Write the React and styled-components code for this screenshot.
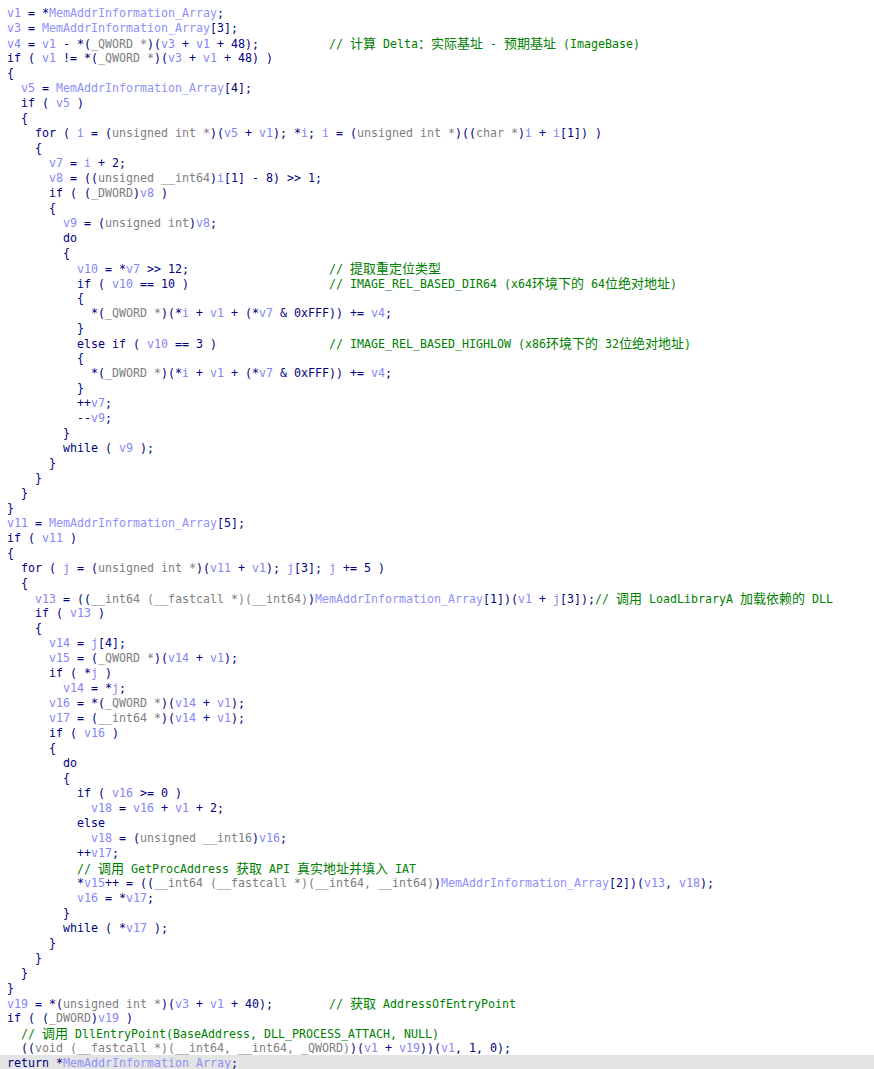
import React from "react";
import styled, { createGlobalStyle } from "styled-components";

const Global = createGlobalStyle`
  html, body { margin: 0; padding: 0; background: #ffffff; }
  #root { min-height: 1069px; background: #ffffff; }
`;

const COLORS = {
  punct: "#000080",
  kw: "#000080",
  num: "#000080",
  var: "#8585f5",
  glob: "#9090fa",
  type: "#808080",
  comment: "#008000",
};

const Editor = styled.div`
  padding-top: 5px;
  font-family: "DejaVu Sans Mono", "Liberation Mono", monospace;
  font-size: 11.63px;
  color: #000080;
  width: 874px;
  height: 1069px;
  overflow: hidden;
  box-sizing: border-box;
`;

const Line = styled.div`
  box-sizing: border-box;
  height: 15px;
  padding-top: 1px;
  line-height: 14px;
  white-space: pre;
  padding-left: 7px;
  background: ${(p) => (p.$active ? "#e4e4e4" : "transparent")};
`;

const Tok = styled.span`
  color: ${(p) => COLORS[p.$kind] || "#000080"};
`;

const Cjk = styled.span`
  font-family: "Noto Sans CJK SC", sans-serif;
  font-size: 13px;
  line-height: 14px;
`;

const VARS = new Set(["i", "j"]);
const KW = new Set(["if", "for", "do", "while", "else", "return"]);

function splitCjk(text, keyBase) {
  const parts = text.split(/([\u3000-\u9fff\uff00-\uffef]+)/);
  return parts.map((p, idx) =>
    /[\u3000-\u9fff\uff00-\uffef]/.test(p) ? (
      <Cjk key={keyBase + "c" + idx}>{p}</Cjk>
    ) : (
      p
    )
  );
}

function tokenize(code) {
  const out = [];
  const segs = code.split("`");
  segs.forEach((seg, si) => {
    if (si % 2 === 1) {
      out.push({ kind: "type", text: seg });
      return;
    }
    const re = /([A-Za-z_][A-Za-z0-9_]*)|(0x[0-9A-Fa-f]+|\d+)|(\s+)|([^A-Za-z0-9_\s]+)/g;
    let m;
    while ((m = re.exec(seg))) {
      if (m[1]) {
        const w = m[1];
        let kind = "punct";
        if (KW.has(w)) kind = "kw";
        else if (w === "MemAddrInformation_Array") kind = "glob";
        else if (/^v\d+$/.test(w) || VARS.has(w)) kind = "var";
        out.push({ kind, text: w });
      } else if (m[2]) out.push({ kind: "num", text: m[2] });
      else out.push({ kind: "punct", text: m[0] });
    }
  });
  return out;
}

const COL = 46;

const L = (code, comment) => ({ code, comment });

const LINES = [
  L("v1 = *MemAddrInformation_Array;"),
  L("v3 = MemAddrInformation_Array[3];"),
  L("v4 = v1 - *(`_QWORD *`)(v3 + v1 + 48);", "// 计算 Delta：实际基址 - 预期基址 (ImageBase)"),
  L("if ( v1 != *(`_QWORD *`)(v3 + v1 + 48) )"),
  L("{"),
  L("  v5 = MemAddrInformation_Array[4];"),
  L("  if ( v5 )"),
  L("  {"),
  L("    for ( i = (`unsigned int *`)(v5 + v1); *i; i = (`unsigned int *`)((`char *`)i + i[1]) )"),
  L("    {"),
  L("      v7 = i + 2;"),
  L("      v8 = ((`unsigned __int64`)i[1] - 8) >> 1;"),
  L("      if ( (`_DWORD`)v8 )"),
  L("      {"),
  L("        v9 = (`unsigned int`)v8;"),
  L("        do"),
  L("        {"),
  L("          v10 = *v7 >> 12;", "// 提取重定位类型"),
  L("          if ( v10 == 10 )", "// IMAGE_REL_BASED_DIR64 (x64环境下的 64位绝对地址)"),
  L("          {"),
  L("            *(`_QWORD *`)(*i + v1 + (*v7 & 0xFFF)) += v4;"),
  L("          }"),
  L("          else if ( v10 == 3 )", "// IMAGE_REL_BASED_HIGHLOW (x86环境下的 32位绝对地址)"),
  L("          {"),
  L("            *(`_DWORD *`)(*i + v1 + (*v7 & 0xFFF)) += v4;"),
  L("          }"),
  L("          ++v7;"),
  L("          --v9;"),
  L("        }"),
  L("        while ( v9 );"),
  L("      }"),
  L("    }"),
  L("  }"),
  L("}"),
  L("v11 = MemAddrInformation_Array[5];"),
  L("if ( v11 )"),
  L("{"),
  L("  for ( j = (`unsigned int *`)(v11 + v1); j[3]; j += 5 )"),
  L("  {"),
  L("    v13 = ((`__int64 (__fastcall *)(__int64)`)MemAddrInformation_Array[1])(v1 + j[3]);", "// 调用 LoadLibraryA 加载依赖的 DLL"),
  L("    if ( v13 )"),
  L("    {"),
  L("      v14 = j[4];"),
  L("      v15 = (`_QWORD *`)(v14 + v1);"),
  L("      if ( *j )"),
  L("        v14 = *j;"),
  L("      v16 = *(`_QWORD *`)(v14 + v1);"),
  L("      v17 = (`__int64 *`)(v14 + v1);"),
  L("      if ( v16 )"),
  L("      {"),
  L("        do"),
  L("        {"),
  L("          if ( v16 >= 0 )"),
  L("            v18 = v16 + v1 + 2;"),
  L("          else"),
  L("            v18 = (`unsigned __int16`)v16;"),
  L("          ++v17;"),
  L("          ", "// 调用 GetProcAddress 获取 API 真实地址并填入 IAT"),
  L("          *v15++ = ((`__int64 (__fastcall *)(__int64, __int64)`)MemAddrInformation_Array[2])(v13, v18);"),
  L("          v16 = *v17;"),
  L("        }"),
  L("        while ( *v17 );"),
  L("      }"),
  L("    }"),
  L("  }"),
  L("}"),
  L("v19 = *(`unsigned int *`)(v3 + v1 + 40);", "// 获取 AddressOfEntryPoint"),
  L("if ( (`_DWORD`)v19 )"),
  L("  ", "// 调用 DllEntryPoint(BaseAddress, DLL_PROCESS_ATTACH, NULL)"),
  L("  ((`void (__fastcall *)(__int64, __int64, _QWORD)`)(v1 + v19))(v1, 1, 0);"),
  L("return *MemAddrInformation_Array;"),
];

function CodeLine({ line, active, index }) {
  const toks = tokenize(line.code);
  const visibleLen = line.code.replace(/`/g, "").length;
  let pad = "";
  if (line.comment && line.code.trim().length > 0 && visibleLen < COL) {
    pad = " ".repeat(COL - visibleLen);
  }
  return (
    <Line $active={active}>
      {toks.map((t, k) => (
        <Tok key={k} $kind={t.kind}>
          {t.text}
        </Tok>
      ))}
      {pad}
      {line.comment ? (
        <Tok $kind="comment">{splitCjk(line.comment, "l" + index)}</Tok>
      ) : null}
    </Line>
  );
}

export default function App() {
  return (
    <>
      <Global />
      <Editor>
        {LINES.map((line, i) => (
          <CodeLine key={i} index={i} line={line} active={i === LINES.length - 1} />
        ))}
      </Editor>
    </>
  );
}
